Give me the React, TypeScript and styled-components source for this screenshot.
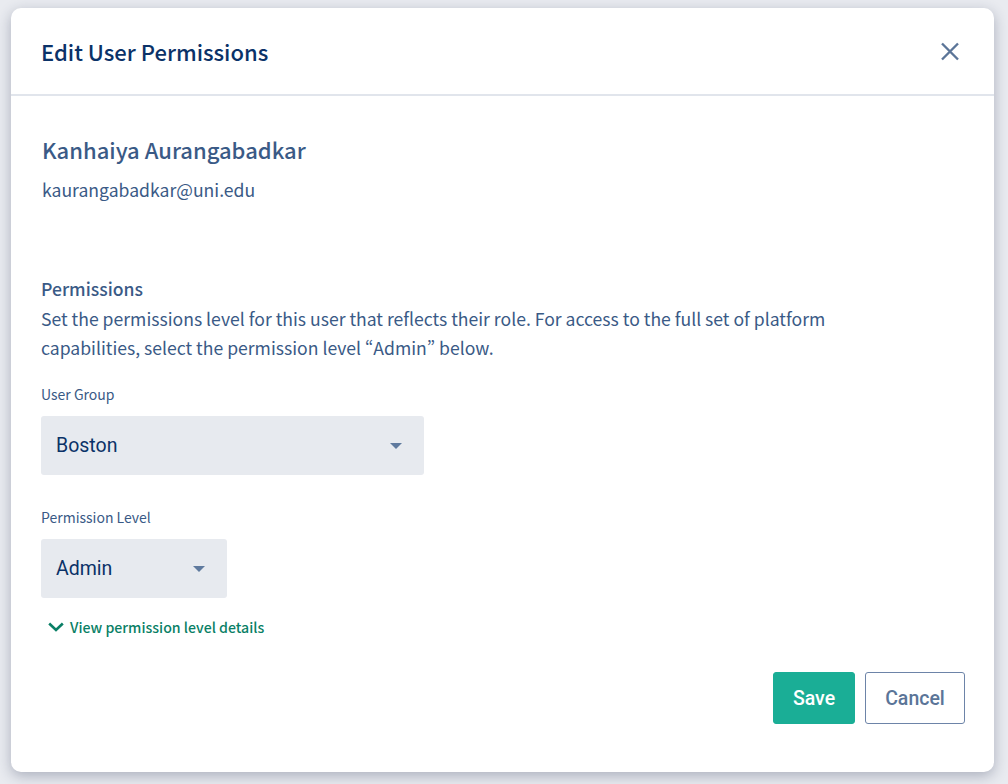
import React from "react";
import styled, { createGlobalStyle } from "styled-components";

const sans = `"Noto Sans CJK SC", "Open Sans", sans-serif`;
const roboto = `Roboto, "Liberation Sans", sans-serif`;

const GlobalStyle = createGlobalStyle`
  html, body {
    margin: 0;
    padding: 0;
    height: 100%;
    background: #e9ebf0;
    overflow: hidden;
  }
  * {
    box-sizing: border-box;
  }
`;

const Page = styled.div`
  width: 1008px;
  height: 784px;
  padding: 8px 14px 12px 11px;
`;

const Modal = styled.div`
  width: 983px;
  height: 764px;
  background: #fff;
  border-radius: 10px;
  box-shadow: 0 4px 14px rgba(40, 50, 80, 0.32);
  display: flex;
  flex-direction: column;
  font-family: ${sans};
`;

const Header = styled.div`
  height: 88px;
  flex: none;
  display: flex;
  align-items: center;
  justify-content: space-between;
  padding: 0 34px 0 30px;
  border-bottom: 2px solid #e1e5ec;
`;

const Title = styled.h1`
  margin: 0;
  font-size: 22px;
  line-height: 30px;
  font-weight: 500;
  color: #0b3268;
`;

const CloseButton = styled.button`
  border: 0;
  background: none;
  padding: 0;
  margin-top: 2px;
  width: 20px;
  height: 20px;
  display: flex;
  color: #5b7598;
`;

const Body = styled.div`
  flex: 1;
  display: flex;
  flex-direction: column;
  padding: 38px 29px 0 30px;
`;

const UserName = styled.div`
  margin-left: 1px;
  font-size: 22px;
  line-height: 30px;
  font-weight: 500;
  color: #3a5a86;
`;

const UserEmail = styled.div`
  margin: 13px 0 0 1px;
  font-size: 17.6px;
  line-height: 26px;
  color: #3a5a86;
`;

const SectionTitle = styled.div`
  margin-top: 73px;
  font-size: 17.6px;
  line-height: 26px;
  font-weight: 500;
  color: #3a5a86;
`;

const SectionText = styled.p`
  margin: 2px 0 0;
  width: 830px;
  font-size: 17.6px;
  line-height: 29px;
  color: #3a5a86;
  font-feature-settings: "pwid" 1;
`;

const Field = styled.div<{ $gap: number }>`
  margin-top: ${(p) => p.$gap}px;
`;

const Label = styled.div`
  font-size: 14px;
  line-height: 19px;
  color: #3a5a86;
`;

const Select = styled.div<{ $width: number }>`
  margin-top: 12px;
  width: ${(p) => p.$width}px;
  height: 59px;
  padding: 0 22px 0 15px;
  background: #e7eaef;
  border-radius: 3px;
  display: flex;
  align-items: center;
  justify-content: space-between;
  font-family: ${roboto};
  font-size: 19.5px;
  color: #0b3268;
`;

const Caret = styled.span`
  width: 0;
  height: 0;
  border-left: 6.5px solid transparent;
  border-right: 6.5px solid transparent;
  border-top: 6.5px solid #5f7a9e;
`;

const DetailsLink = styled.a`
  margin: 19px 0 0 7px;
  display: flex;
  align-items: center;
  gap: 6px;
  font-size: 14.15px;
  line-height: 20px;
  font-weight: 500;
  color: #0a7f66;
`;

const Footer = styled.div`
  margin-top: 35px;
  display: flex;
  justify-content: flex-end;
  gap: 10px;
`;

const Button = styled.button<{ $primary?: boolean }>`
  height: 52px;
  width: ${(p) => (p.$primary ? 82 : 100)}px;
  border-radius: 3px;
  border: 1px solid ${(p) => (p.$primary ? "#1aae96" : "#6d84a8")};
  background: ${(p) => (p.$primary ? "#1aae96" : "#fff")};
  color: ${(p) => (p.$primary ? "#fff" : "#5b7598")};
  font-family: ${roboto};
  font-size: 19.5px;
  font-weight: 500;
  padding: 0;
`;

function EditUserPermissions() {
  return (
    <Modal>
      <Header>
        <Title>Edit User Permissions</Title>
        <CloseButton aria-label="Close">
          <svg width="20" height="20" viewBox="0 0 20 20" fill="none">
            <path d="M2 1.5 L18 17.5 M18 1.5 L2 17.5" stroke="currentColor" strokeWidth="2.4" />
          </svg>
        </CloseButton>
      </Header>
      <Body>
        <UserName>Kanhaiya Aurangabadkar</UserName>
        <UserEmail>kaurangabadkar@uni.edu</UserEmail>
        <SectionTitle>Permissions</SectionTitle>
        <SectionText>
          Set the permissions level for this user that reflects their role. For access to the full set of platform
          capabilities, select the permission level “Admin” below.
        </SectionText>
        <Field $gap={23}>
          <Label>User Group</Label>
          <Select $width={383}>
            Boston
            <Caret />
          </Select>
        </Field>
        <Field $gap={33}>
          <Label>Permission Level</Label>
          <Select $width={186}>
            Admin
            <Caret />
          </Select>
        </Field>
        <DetailsLink>
          <svg width="16" height="10" viewBox="0 0 16 10" fill="none">
            <path d="M1.2 1.5 L8 8 L14.8 1.5" stroke="currentColor" strokeWidth="2.6" />
          </svg>
          View permission level details
        </DetailsLink>
        <Footer>
          <Button $primary>Save</Button>
          <Button>Cancel</Button>
        </Footer>
      </Body>
    </Modal>
  );
}

export default function App() {
  return (
    <Page>
      <GlobalStyle />
      <EditUserPermissions />
    </Page>
  );
}
